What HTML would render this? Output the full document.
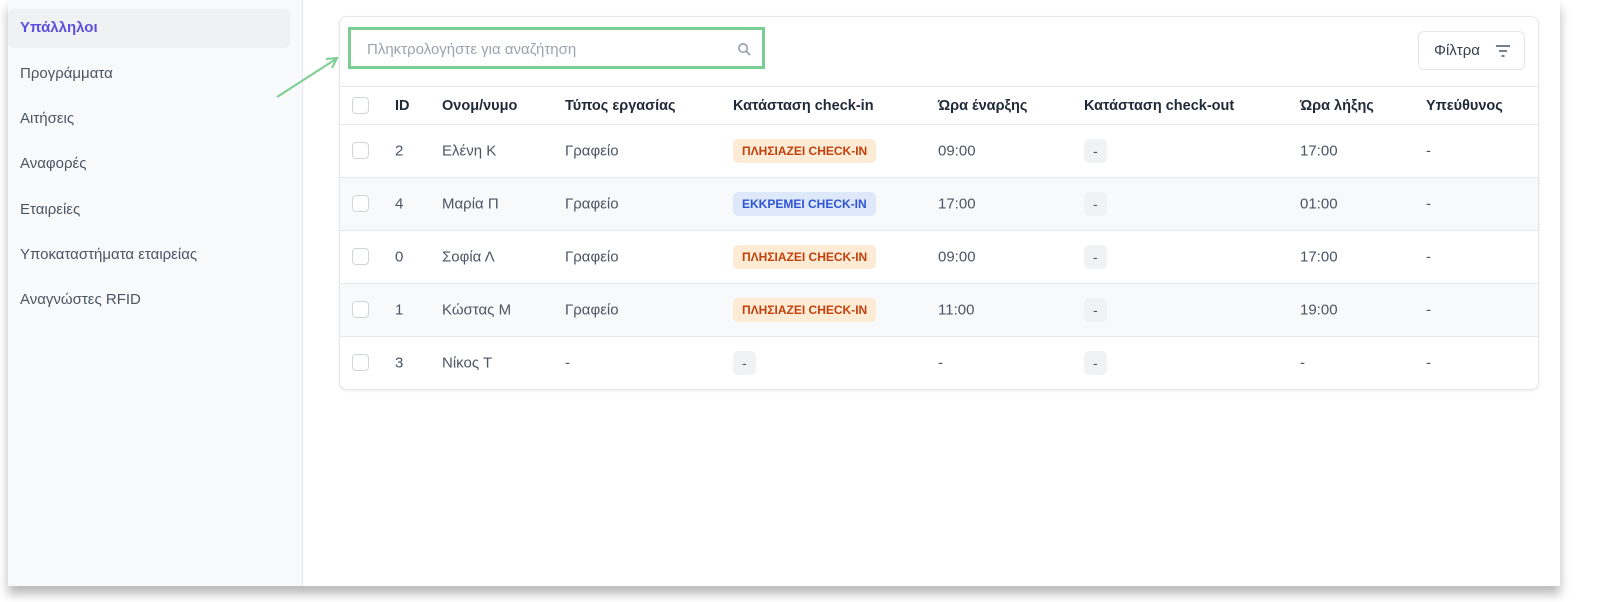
<!DOCTYPE html>
<html><head><meta charset="utf-8"><style>
*{box-sizing:border-box;margin:0;padding:0}
body{width:1616px;height:602px;background:#fff;font-family:"Liberation Sans",Arial,sans-serif;position:relative;overflow:hidden;color:#374151}
.frame{position:absolute;left:8px;top:0;width:1552px;height:586px;background:#fff;box-shadow:0 8px 10px rgba(0,0,0,.28)}
.side{position:absolute;left:0;top:0;width:295px;height:586px;background:#f8f9fb;border-right:1px solid #e5e7eb}
.item{position:absolute;left:12px;font-size:15px;color:#4b5563}
.active{position:absolute;left:0;top:9px;width:282px;height:39px;background:#f0f1f3;border-radius:6px}
.card{position:absolute;left:339px;top:16px;width:1200px;height:374px;border:1px solid #e5e7eb;border-radius:8px;box-shadow:0 1px 3px rgba(0,0,0,.08);background:#fff;overflow:hidden}
.search{position:absolute;left:348px;top:27px;width:417px;height:42px;border:3px solid #7ccf94}
.search span{position:absolute;left:16px;top:11px;font-size:15px;color:#9ca3af}
.filter{position:absolute;left:1418px;top:31px;width:107px;height:39px;border:1px solid #e5e7eb;border-radius:6px;font-size:15px;color:#374151}
.row{position:absolute;left:340px;width:1198px;height:53px;border-top:1px solid #e5e7eb}
.c{position:absolute;font-size:15px;color:#4b5563;top:50%;transform:translateY(-50%);white-space:nowrap}
.h .c{font-weight:bold;color:#1f2937;font-size:14.5px}
.cb{position:absolute;left:12px;top:50%;margin-top:-9px;width:17px;height:17px;border:1px solid #d1d5db;border-radius:4px;background:#fff}
.b{position:absolute;top:50%;transform:translateY(-50%);font-size:12px;font-weight:bold;padding:5px 9px;border-radius:5px;white-space:nowrap}
.o{background:#fdebd6;color:#c2410c}
.bl{background:#dde8fb;color:#2f55d4}
.g{background:#f1f2f4;color:#4b5563;padding:4px 9px;font-weight:normal;font-size:14px}
</style></head><body>
<div class="frame">
<div class="side">
<div class="active"></div>
<div class="item" style="top:19px;color:#5b4fe0;font-weight:bold">Υπάλληλοι</div>
<div class="item" style="top:65px">Προγράμματα</div>
<div class="item" style="top:110px">Αιτήσεις</div>
<div class="item" style="top:155px">Αναφορές</div>
<div class="item" style="top:201px">Εταιρείες</div>
<div class="item" style="top:246px">Υποκαταστήματα εταιρείας</div>
<div class="item" style="top:291px">Αναγνώστες RFID</div>
</div>
</div>
<div class="card"></div>
<div class="search"><span>Πληκτρολογήστε για αναζήτηση</span>
<svg style="position:absolute;right:10px;top:12px" width="15" height="15" viewBox="0 0 16 16"><circle cx="6.5" cy="6.5" r="4.5" fill="none" stroke="#9ca3af" stroke-width="1.8"/><path d="M10 10l4 4" stroke="#9ca3af" stroke-width="2"/></svg></div>
<div class="filter"><span style="position:absolute;left:15px;top:10px">Φίλτρα</span>
<svg style="position:absolute;left:76px;top:13px" width="16" height="12" viewBox="0 0 16 12"><path d="M1 1h14M4 6h8M6.5 11h3" stroke="#4b5563" stroke-width="1.6"/></svg></div>
<svg style="position:absolute;left:270px;top:50px" width="75" height="55"><path d="M7 47L66 9" stroke="#7ccf94" stroke-width="2"/><path d="M56 9L67 8L62 18" fill="none" stroke="#7ccf94" stroke-width="2"/></svg>

<div class="row h" style="top:86px;height:38px"><div class="cb"></div>
<div class="c" style="left:55px">ID</div><div class="c" style="left:102px">Ονομ/νυμο</div><div class="c" style="left:225px">Τύπος εργασίας</div><div class="c" style="left:393px">Κατάσταση check-in</div><div class="c" style="left:598px">Ώρα έναρξης</div><div class="c" style="left:744px">Κατάσταση check-out</div><div class="c" style="left:960px">Ώρα λήξης</div><div class="c" style="left:1086px">Υπεύθυνος</div></div>

<div class="row" style="top:124px"><div class="cb"></div><div class="c" style="left:55px">2</div><div class="c" style="left:102px">Ελένη Κ</div><div class="c" style="left:225px">Γραφείο</div><div class="b o" style="left:393px">ΠΛΗΣΙΑΖΕΙ CHECK-IN</div><div class="c" style="left:598px">09:00</div><div class="b g" style="left:744px">-</div><div class="c" style="left:960px">17:00</div><div class="c" style="left:1086px">-</div></div>
<div class="row" style="top:177px;background:#f8f9fb"><div class="cb"></div><div class="c" style="left:55px">4</div><div class="c" style="left:102px">Μαρία Π</div><div class="c" style="left:225px">Γραφείο</div><div class="b bl" style="left:393px">ΕΚΚΡΕΜΕΙ CHECK-IN</div><div class="c" style="left:598px">17:00</div><div class="b g" style="left:744px">-</div><div class="c" style="left:960px">01:00</div><div class="c" style="left:1086px">-</div></div>
<div class="row" style="top:230px"><div class="cb"></div><div class="c" style="left:55px">0</div><div class="c" style="left:102px">Σοφία Λ</div><div class="c" style="left:225px">Γραφείο</div><div class="b o" style="left:393px">ΠΛΗΣΙΑΖΕΙ CHECK-IN</div><div class="c" style="left:598px">09:00</div><div class="b g" style="left:744px">-</div><div class="c" style="left:960px">17:00</div><div class="c" style="left:1086px">-</div></div>
<div class="row" style="top:283px;background:#f8f9fb"><div class="cb"></div><div class="c" style="left:55px">1</div><div class="c" style="left:102px">Κώστας Μ</div><div class="c" style="left:225px">Γραφείο</div><div class="b o" style="left:393px">ΠΛΗΣΙΑΖΕΙ CHECK-IN</div><div class="c" style="left:598px">11:00</div><div class="b g" style="left:744px">-</div><div class="c" style="left:960px">19:00</div><div class="c" style="left:1086px">-</div></div>
<div class="row" style="top:336px"><div class="cb"></div><div class="c" style="left:55px">3</div><div class="c" style="left:102px">Νίκος Τ</div><div class="c" style="left:225px">-</div><div class="b g" style="left:393px">-</div><div class="c" style="left:598px">-</div><div class="b g" style="left:744px">-</div><div class="c" style="left:960px">-</div><div class="c" style="left:1086px">-</div></div>
</body></html>
